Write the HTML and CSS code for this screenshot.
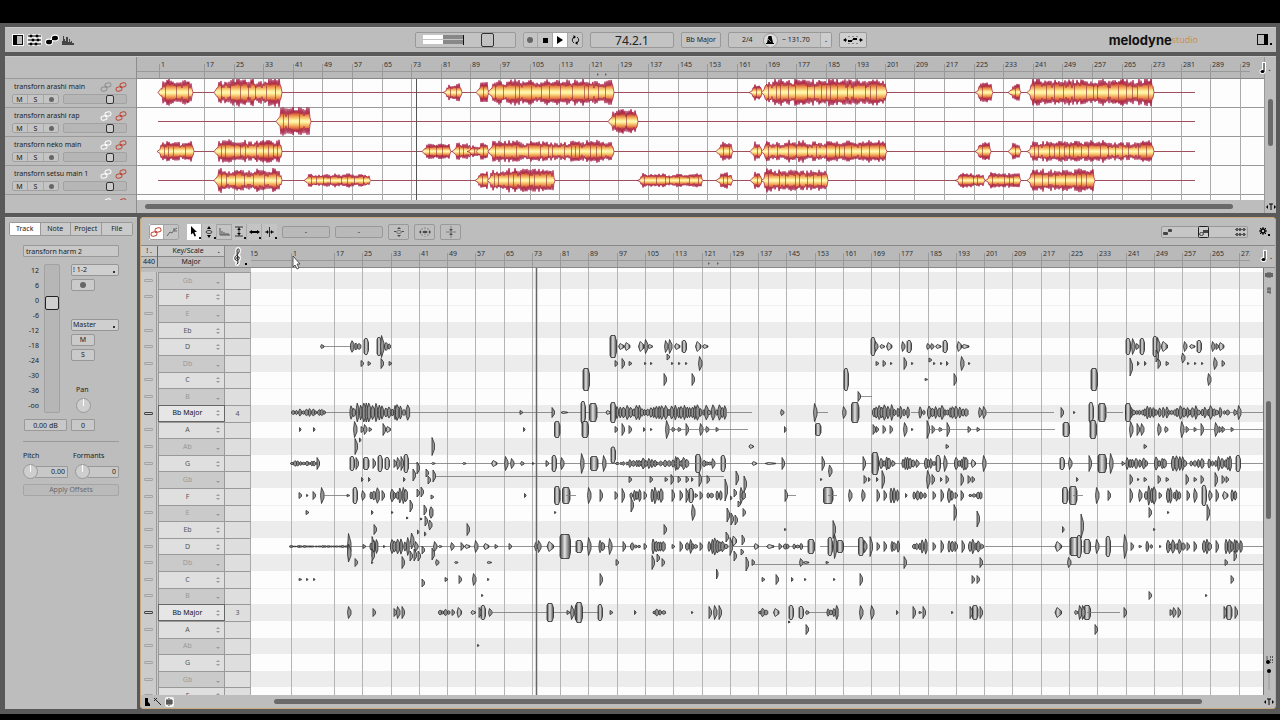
FILE: index.html
```html
<!DOCTYPE html>
<html lang="en">
<head>
  <meta charset="utf-8">
  <title>Melodyne Studio</title>
  <link rel="stylesheet" href="styles.css">
</head>
<body>

<svg class="defs" width="0" height="0">
  <defs>
    <linearGradient id="wave" x1="0" y1="0" x2="0" y2="1">
      <stop offset="0" stop-color="#a01440"/>
      <stop offset="0.18" stop-color="#b8303c"/>
      <stop offset="0.3" stop-color="#ec8c4a"/>
      <stop offset="0.44" stop-color="#fde88e"/>
      <stop offset="0.5" stop-color="#fff8b8"/>
      <stop offset="0.56" stop-color="#fde88e"/>
      <stop offset="0.7" stop-color="#ec8c4a"/>
      <stop offset="0.82" stop-color="#b8303c"/>
      <stop offset="1" stop-color="#a01440"/>
    </linearGradient>
    <linearGradient id="blob">
      <stop offset="0" stop-color="#444"/>
      <stop offset="0.45" stop-color="#e4e4e4"/>
      <stop offset="1" stop-color="#444"/>
    </linearGradient>
    <symbol id="link" viewBox="0 0 12 10">
      <rect x="1" y="5" width="6" height="4" rx="2" transform="rotate(-12 4 7)" fill="none" stroke="currentColor"/>
      <rect x="5" y="1" width="6" height="4" rx="2" transform="rotate(-12 8 3)" fill="none" stroke="currentColor"/>
      <path d="M5 6 L7 4" stroke="currentColor"/>
    </symbol>
    <symbol id="quarter" viewBox="0 0 8 12">
      <path d="M5 0 V9" stroke="#fff" stroke-width="4"/>
      <ellipse cx="3.500" cy="9.500" rx="3" ry="2.500" fill="#fff"/>
      <path d="M5 1 V9" stroke="#000" stroke-width="1"/>
      <ellipse cx="3.500" cy="9.500" rx="2" ry="1.500"/>
    </symbol>
    <symbol id="zoomfit" viewBox="0 0 10 8">
      <path d="M5 1 V7 M3 1 H7" stroke="#000" fill="none"/>
      <path d="M0 4 L2 2 V6 Z M10 4 L8 2 V6 Z"/>
    </symbol>
  </defs>
</svg>

<div class="app">

  <header class="panel topbar">
    <div class="views">
      <svg width="12" height="12" viewBox="0 0 12 12"><rect x="0" y="0" width="12" height="12" fill="#fff"/><rect x="1.500" y="1.500" width="9" height="9" fill="#bbb" stroke="#111"/><rect x="1" y="1" width="4" height="10"/></svg>
      <svg width="15" height="12" viewBox="0 0 15 12"><rect width="15" height="12" rx="3" fill="#eee"/><path d="M1 2 H14 M1 6 H14 M1 10 H14" stroke="#000"/><path d="M3 1h2v2h-2z M9 1h2v2h-2z M5 5h2v2h-2z M10 5h2v2h-2z M3 9h2v2h-2z M8 9h2v2h-2z" stroke="#000" stroke-width=".6"/></svg>
      <svg width="14" height="12" viewBox="0 0 14 12"><ellipse cx="4" cy="8" rx="4" ry="3.500" fill="#fff"/><ellipse cx="10" cy="4" rx="4" ry="3.500" fill="#fff"/><ellipse cx="4" cy="8" rx="3" ry="2.300"/><ellipse cx="10" cy="4" rx="3" ry="2.300"/><path d="M6 7 L8 5" stroke="#000"/></svg>
      <svg width="12" height="12" viewBox="0 0 12 12"><path d="M0 11 V7 H1 V2 H2 V5 H3 V7 H4 V3 H6 V8 H7 V5 H8 V8 H9 V7 H10 V9 H12 V11 Z" fill="#444"/></svg>
    </div>
    <div class="transport">
      <div class="volume box">
        <div class="meter"><i></i><i></i></div>
        <input type="range" aria-label="Master volume" min="0" max="100" value="46">
      </div>
      <div class="btns">
        <button aria-label="Record"><i class="rec"></i></button>
        <button aria-label="Stop"><i class="stop"></i></button>
        <button class="on" aria-label="Play"><i class="play"></i></button>
        <button aria-label="Cycle"><svg width="9" height="10" viewBox="0 0 9 10"><path d="M3 2 A3.500 3.500 0 0 0 3 8 M6 2 A3.500 3.500 0 0 1 6 8" fill="none" stroke="#222"/><path d="M2.500 0 L5 2 L2.500 4 Z M6.500 6 L4 8 L6.500 10 Z"/></svg></button>
      </div>
      <div class="box position">74.2.1</div>
      <button class="box scale">Bb Major</button>
      <div class="box tempo">
        <span>2/4</span>
        <button class="metro" aria-label="Metronome"><svg width="8" height="8" viewBox="0 0 8 8"><path d="M2.500 0 H5.500 L7 7 H1 Z"/><path d="M1 2 L5 6" stroke="#aaa" stroke-width=".8"/><path d="M0 7.500 H8" stroke="#000"/></svg></button>
        <span class="bpm">~ 131.70</span>
        <button class="drop" aria-label="Tempo menu">.</button>
      </div>
      <button class="box adapt" aria-label="Auto stretch"><svg width="20" height="10" viewBox="0 0 20 10"><path d="M0 5 L3 3 V7 Z M20 5 L17 3 V7 Z M5 5 h4 v2 h-4z M10 3 h4 v2 h-4z"/><path d="M2 5 H4 M16 5 H18 M8 6 L11 4" stroke="#000"/><path d="M5 1.500 H15 M5 8.500 H15" stroke="#888" stroke-dasharray="2 2"/></svg></button>
    </div>
    <div class="brand"><b>melodyne</b><span>studio</span></div>
    <svg class="side" width="15" height="12" viewBox="0 0 15 12"><rect x=".5" y=".5" width="10" height="10" fill="none" stroke="#111"/><rect x="7" y="0" width="4" height="11"/><rect x="13" y="9" width="2" height="2"/></svg>
  </header>

  <section class="panel arrange">
    <div class="tracks">
      <div class="tracks-head"></div>
      <div id="tracks" class="tracks-body"></div>
    </div>
    <div class="lanes">
      <svg id="arrangeRuler" class="ruler"></svg>
      <div class="lane-body"><svg id="arrangeLanes"></svg></div>
      <div class="hscroll"><i></i></div>
    </div>
    <div class="vscroll">
      <div class="corner"><svg width="8" height="12"><use href="#quarter"/></svg><span>.</span></div>
      <div class="vtrack"><i></i></div>
      <svg width="10" height="8"><use href="#zoomfit"/></svg>
    </div>
  </section>

  <main>
    <aside class="panel inspector">
      <nav class="tabs">
        <button class="on">Track</button><button>Note</button><button>Project</button><button>File</button>
      </nav>
      <input class="field name" type="text" aria-label="Track name" value="transforn harm 2">
      <div class="strip">
        <div class="scale-labels">
          <span>12</span><span>6</span><span>0</span><span>-6</span><span>-12</span><span>-18</span><span>-24</span><span>-30</span><span>-36</span><span>-oo</span>
        </div>
        <input class="fader" type="range" aria-label="Track volume" min="0" max="100" value="77">
        <div class="routing">
          <select aria-label="Input"><option>! 1-2</option></select>
          <button class="small" aria-label="Record arm"><i class="rec"></i></button>
          <select class="out" aria-label="Output"><option>Master</option></select>
          <button class="small">M</button>
          <button class="small">S</button>
          <span class="pan">Pan</span>
          <i class="knob"></i>
        </div>
      </div>
      <div class="readouts">
        <input class="field" type="text" aria-label="Volume" value="0.00 dB">
        <input class="field" type="text" aria-label="Pan" value="0">
      </div>
      <div class="offsets">
        <label for="pitch">Pitch</label><label for="formants">Formants</label>
        <div class="dial"><i class="knob"></i><input id="pitch" class="field" type="text" value="0.00"></div>
        <div class="dial"><i class="knob"></i><input id="formants" class="field" type="text" value="0"></div>
      </div>
      <button class="apply" disabled>Apply Offsets</button>
    </aside>

    <section class="editor">
      <div class="tools">
        <div class="btns">
          <button class="on red" aria-label="Assign"><svg width="12" height="10"><use href="#link"/></svg></button>
          <button aria-label="Wrench"><svg width="12" height="10" viewBox="0 0 12 10"><path d="M1 9 L4 5 L6 6 L8 3 L11 1 M8 1 V4 H11" fill="none" stroke="#666"/></svg></button>
        </div>
        <div class="btns six">
          <button class="on dot" aria-label="Main tool"><svg width="8" height="11" viewBox="0 0 8 11"><path d="M1 0 L7 6 H4.500 L6 10 L4.500 10.500 L3 7 L1 8.500 Z"/></svg></button>
          <button class="dot" aria-label="Pitch tool"><svg width="8" height="12" viewBox="0 0 8 12"><path d="M4 0 L6 3 H2 Z M4 12 L6 9 H2 Z"/><ellipse cx="4" cy="6" rx="3" ry="1.500" fill="none" stroke="#444"/></svg></button>
          <button aria-label="Formant tool"><svg width="11" height="8" viewBox="0 0 11 8"><path d="M1 0 V7 H11 M3 7 V3 M5 7 V4 M7 7 V5 M9 7 V5" fill="none" stroke="#555"/></svg></button>
          <button class="dot" aria-label="Amplitude tool"><svg width="10" height="11" viewBox="0 0 10 11"><path d="M1 1 H9 M1 10 H9 M5 1 V10" stroke="#333"/><path d="M5 2 L7 4 H3 Z M5 9 L7 7 H3 Z"/></svg></button>
          <button class="dot" aria-label="Timing tool"><svg width="11" height="8" viewBox="0 0 11 8"><path d="M0 4 L3 2 V6 Z M11 4 L8 2 V6 Z M3 3 h5 v2 h-5z"/></svg></button>
          <button class="dot" aria-label="Note separation tool"><svg width="11" height="10" viewBox="0 0 11 10"><path d="M5.500 0 V10 M1 5 H10" stroke="#333"/><path d="M2 5 L4 3 V7 Z M9 5 L7 3 V7 Z"/></svg></button>
        </div>
        <input class="value" type="text" aria-label="Pitch value" value="-">
        <input class="value" type="text" aria-label="Cent value" value="-">
        <button class="macro" aria-label="Correct pitch"><svg width="12" height="12" viewBox="0 0 12 12"><path d="M6 1 L8 3 H4 Z M6 11 L8 9 H4 Z M1 5 h2 v1 h-2z M9 5 h2 v1 h-2z"/><ellipse cx="6" cy="6" rx="2.500" ry="1.500" fill="none" stroke="#444"/></svg></button>
        <button class="macro" aria-label="Quantize time"><svg width="12" height="10" viewBox="0 0 12 10"><path d="M6 0 V10 M3 1 V9 M9 1 V9" stroke="#666" stroke-dasharray="2 1"/><path d="M0 5 L2 3 V7 Z M12 5 L10 3 V7 Z M4 4 h4 v2 h-4z"/></svg></button>
        <button class="macro" aria-label="Level"><svg width="10" height="12" viewBox="0 0 10 12"><path d="M0 6 H10 M5 0 V12" stroke="#555"/><path d="M5 5 L7 3 H3 Z M5 7 L7 9 H3 Z"/></svg></button>
        <div class="display">
          <svg width="9" height="6" viewBox="0 0 9 6"><rect x="0" y="3" width="5" height="3" rx="1" fill="#444"/><rect x="5" y="0" width="4" height="3" rx="1" fill="#444"/></svg>
          <svg class="sel" width="11" height="12" viewBox="0 0 11 12"><rect x=".5" y=".5" width="10" height="11" rx="1" fill="#ccc" stroke="#222"/><ellipse cx="3.500" cy="8" rx="2" ry="1.500" fill="none" stroke="#444"/><rect x="5" y="4" width="5" height="3" fill="#444"/></svg>
          <svg width="11" height="8" viewBox="0 0 11 8"><path d="M0 1.500 H11 M0 6.500 H11" stroke="#555"/><path d="M1 0h2v3h-2z M4 0h2v3h-2z M8 0h2v3h-2z M1 5h2v3h-2z M4 5h2v3h-2z M8 5h2v3h-2z" fill="#555"/></svg>
        </div>
        <button class="gear" aria-label="Options"><svg width="11" height="9" viewBox="0 0 11 9"><circle cx="4" cy="4" r="2" fill="none" stroke="#000" stroke-width="1.500"/><path d="M4 0 V2 M4 6 V8 M0 4 H2 M6 4 H8 M1 1 L2.500 2.500 M7 1 L5.500 2.500 M1 7 L2.500 5.500 M7 7 L5.500 5.500" stroke="#000"/><rect x="9" y="7" width="2" height="2"/></svg></button>
      </div>

      <div class="heads">
        <div class="tuning"><span>! .</span><span>440</span></div>
        <div class="keyhead"><span>Key/Scale<em>.</em></span><span>Major</span></div>
        <div class="clef"><svg width="18" height="20" viewBox="0 0 18 20"><g fill="none" stroke-linecap="round"><path d="M5 17 L6 16 L5 4 C5 1 8 1 7 5 C6 8 2 9 3 12 C4 15 8 13 7 10 C5 9 4 11 5 12" stroke="#f0f0f0" stroke-width="4"/><path d="M5 17 L6 16 L5 4 C5 1 8 1 7 5 C6 8 2 9 3 12 C4 15 8 13 7 10 C5 9 4 11 5 12" stroke="#222"/></g><rect x="13" y="16" width="2" height="2"/></svg></div>
        <svg id="editorRuler" class="ruler"></svg>
        <div class="corner"><svg width="8" height="12"><use href="#quarter"/></svg><span>.</span></div>
      </div>

      <div class="score">
        <div class="keys" id="keys"></div>
        <div class="canvas">
          <div class="stripes" id="stripes"></div>
          <svg id="notes"></svg>
        </div>
        <div class="vscroll">
          <svg width="8" height="8" viewBox="0 0 8 8"><path d="M1 2 V6 M3 1 V7 M5 1 V7 M7 2 V6 M0 3 H8 M0 5 H8" stroke="#333" stroke-width=".8"/></svg>
          <svg width="8" height="8" viewBox="0 0 8 8"><path d="M3 1 V7 M5 1 V8 M2 3 H6 M2 6 H6" stroke="#444" stroke-width=".8"/></svg>
          <div class="vtrack"><i></i></div>
          <svg width="8" height="34" viewBox="0 0 8 34"><path d="M5.500 0 V7 M7.500 0 V7 M1 1 H4 M1 3 H4" stroke="#555" stroke-dasharray="2 1"/><circle cx="3" cy="6" r="2"/><circle cx="4" cy="15" r="2"/><path d="M4 17 V34" stroke="#999"/></svg>
        </div>
      </div>

      <div class="foot">
        <svg width="32" height="10" viewBox="0 0 32 10"><path d="M1 1 H4 V5 L6 7 V9 H1 Z"/><path d="M10 1 L17 8 M10 4 L13 1" stroke="#222"/><rect x="21" y="0" width="9" height="10" rx="2" fill="#f4f4f4"/><path d="M23 2 V8 M25 1 V9 M27 2 V8 M22 4 H29 M22 6 H29" stroke="#000" stroke-width=".8"/></svg>
        <div class="hscroll"><i></i></div>
        <svg width="10" height="8"><use href="#zoomfit"/></svg>
      </div>

      <svg class="pointer" width="10" height="16" viewBox="0 0 10 16"><path d="M1 1 L8 9 H5 L7 13 L5 14 L3 10 L1 12 Z" fill="#fff" stroke="#333" stroke-width=".8"/></svg>
    </section>
  </main>
</div>

<script src="script.js"></script>
</body>
</html>
```

FILE: styles.css
```css
* {
  box-sizing: border-box;
}

body {
  margin: 0;
  height: 100vh;
  padding: 23px 0 6px;
  background: #000;
  font-family: "Noto Sans", Tahoma, sans-serif;
  font-size: 7px;
  line-height: 10px;
  color: #222;
}

button, input, select {
  font: inherit;
  color: inherit;
  margin: 0;
  padding: 0;
}

svg {
  display: block;
  flex: none;
}

i {
  display: block;
}

.defs {
  position: absolute;
}

.app {
  height: 100%;
  display: flex;
  flex-direction: column;
  gap: 4px;
  padding: 4px 4px 5px 5px;
  background: #595959;
}

.panel {
  background: #bdbdbd;
  border-top: 1px solid #cacaca;
}

/* top bar */
.topbar {
  display: flex;
  align-items: center;
  height: 25px;
  flex: none;
  padding-right: 4px;
}

.views {
  display: flex;
  gap: 3px;
  width: 410px;
  padding-left: 7px;
}

.transport {
  display: flex;
  gap: 7px;
}

.box {
  height: 16px;
  border: 1px solid #999;
  border-radius: 2px;
  background: #c3c3c3;
}

.volume {
  display: flex;
  align-items: center;
  width: 101px;
  padding-left: 7px;
}

.meter {
  width: 41px;
  border-right: 1px solid #111;
}

.meter i {
  height: 4px;
  margin-bottom: 1px;
  background: linear-gradient(90deg, #fff 50%, #888 50%);
}

input[type="range"] {
  appearance: none;
  background: transparent;
  border: 1px solid #a2a2a2;
  border-radius: 2px;
}

input.fader,
.track input[type="range"] {
  background: #b6b6b6;
}

.volume input[type="range"] {
  flex: 1;
  min-width: 0;
  width: 50px;
  height: 14px;
  border: none;
}

.volume input::-webkit-slider-thumb {
  appearance: none;
  width: 13px;
  height: 14px;
  border: 1px solid #333;
  border-radius: 2px;
  background: #c2c2c2;
}

.btns {
  display: flex;
  height: 16px;
  outline: 1px solid #a0a0a0;
  outline-offset: -1px;
  border-radius: 2px;
}

.btns button {
  display: flex;
  align-items: center;
  justify-content: center;
  width: 15px;
  border: 0;
  border-right: 1px solid #a8a8a8;
  background: #c4c4c4;
}

.btns button:last-child {
  border-right: 0;
}

.btns button.on {
  background: #fff;
}

.rec {
  width: 6px;
  height: 6px;
  border-radius: 50%;
  background: #666;
}

.stop {
  width: 5px;
  height: 5px;
  background: #000;
}

.play {
  border-left: 6px solid #000;
  border-top: 4px solid transparent;
  border-bottom: 4px solid transparent;
}

.position {
  width: 84px;
  font-size: 12px;
  line-height: 15px;
  text-align: center;
}

.scale {
  width: 40px;
}

.tempo {
  display: flex;
  align-items: center;
  justify-content: space-between;
  width: 104px;
  padding-left: 13px;
}

.metro {
  display: flex;
  align-items: center;
  justify-content: center;
  width: 15px;
  height: 15px;
  border: 1px solid #999;
  border-radius: 50%;
  background: #ddd;
}

.bpm {
  margin-left: -6px;
}

.drop {
  align-self: stretch;
  width: 11px;
  border: 0;
  border-left: 1px solid #aaa;
  background: #cdcdcd;
  font-weight: bold;
}

.adapt {
  display: flex;
  align-items: center;
  justify-content: center;
  width: 28px;
  background: #d0d0d0;
}

.brand {
  display: flex;
  margin-left: auto;
  margin-right: 59px;
  font-family: Inter, sans-serif;
  font-size: 13px;
  line-height: 14px;
  color: #111;
}

.brand b {
  font-weight: 700;
}

.brand span {
  font-family: "Open Sans", sans-serif;
  font-size: 9px;
  color: #cf8a48;
}

/* arrangement */
.arrange {
  display: flex;
  height: 157px;
  flex: none;
}

.tracks {
  width: 132px;
  border-right: 1px solid #8d8d8d;
}

.tracks-head {
  height: 21px;
}

.tracks-body {
  height: 122px;
  overflow: hidden;
}

.track {
  height: 29px;
  padding: 3px 9px 0 7px;
  border-top: 1px solid #999;
}

.track .row {
  display: flex;
  align-items: center;
  gap: 3px;
}

.track .title {
  flex: 1;
  min-width: 0;
  padding-left: 2px;
  white-space: nowrap;
}

.track .row + .row {
  gap: 4px;
  margin-top: 2px;
}

.track .btns {
  width: 47px;
  height: 10px;
}

.track .btns button {
  flex: 1;
  line-height: 9px;
}

.track .rec {
  width: 5px;
  height: 5px;
}

.track input {
  flex: 1;
  width: 64px;
  height: 10px;
}

.track input::-webkit-slider-thumb {
  appearance: none;
  width: 8px;
  height: 9px;
  border: 1px solid #333;
  border-radius: 2px;
  background: #ccc;
}

.grey { color: #8f8f8f; }
.white { color: #fff; }
.red { color: #c04a38; }

.lanes {
  flex: 1;
  min-width: 0;
  display: flex;
  flex-direction: column;
}

.ruler {
  width: 100%;
  height: 21px;
  background: #b9b9b9;
  font-size: 7px;
}

.lane-body {
  height: 122px;
  border-top: 1px solid #888;
  background: #fdfdfd;
  overflow: hidden;
}

.lane-body svg, #notes {
  width: 100%;
  height: 100%;
}

.hscroll {
  flex: 1;
  display: flex;
  align-items: center;
  padding: 0 31px 0 8px;
}

.hscroll i {
  width: 100%;
  height: 5px;
  border-radius: 3px;
  background: #6a6a6a;
}

.vscroll {
  display: flex;
  flex-direction: column;
  align-items: center;
  width: 12px;
  padding-bottom: 2px;
}

.arrange .vscroll {
  border-left: 1px solid #999;
}

.arrange .vscroll .corner {
  height: 21px;
}

.corner {
  display: flex;
  align-items: flex-end;
  width: 12px;
  font-weight: bold;
}

.arrange .corner {
  margin-left: -6px;
  padding-bottom: 4px;
}

.heads .corner {
  padding-bottom: 5px;
}

.corner svg {
  margin-left: -3px;
}

.corner span {
  margin-left: 2px;
}

.vtrack {
  flex: 1;
  width: 5px;
  padding-top: 21px;
}

.vtrack i {
  height: 47px;
  border-radius: 3px;
  background: #6a6a6a;
}

/* lower half */
main {
  flex: 1;
  min-height: 0;
  display: flex;
  gap: 3px;
}

.inspector {
  width: 132px;
  padding: 4px 4px;
}

.inspector .tabs {
  display: flex;
  border: 1px solid #989898;
  border-radius: 2px;
}

.tabs button {
  flex: 1 1 auto;
  width: 25%;
  height: 12px;
  border: 0;
  border-right: 1px solid #999;
  background: #cacaca;
  line-height: 10px;
}

.tabs button:last-child {
  border-right: 0;
}

.tabs button.on {
  background: #fff;
}

.field {
  display: block;
  height: 12px;
  border: 1px solid #999;
  border-radius: 1px;
  background: #c8c8c8;
  text-align: center;
}

.name {
  width: 96px;
  margin: 9px 14px 7px;
  text-align: left;
  padding-left: 2px;
}

.strip {
  display: flex;
  height: 149px;
}

.scale-labels {
  display: flex;
  flex-direction: column;
  justify-content: space-between;
  width: 30px;
  padding: 2px 0;
  text-align: right;
}

.fader {
  writing-mode: vertical-lr;
  direction: rtl;
  width: 16px;
  height: 149px;
  margin-left: 5px;
}

.fader::-webkit-slider-thumb {
  appearance: none;
  width: 14px;
  height: 14px;
  border: 1px solid #222;
  border-radius: 2px;
  background: #cfcfcf;
}

.routing {
  display: flex;
  flex-direction: column;
  gap: 3px;
  margin-left: 11px;
}

.routing select {
  width: 48px;
  height: 12px;
  padding-left: 1px;
  appearance: none;
  border: 1px solid #969696;
  border-radius: 2px;
  background: linear-gradient(#333, #333) 41px 6px / 2px 2px no-repeat #cfcfcf;
}

.routing .out {
  margin-top: 25px;
}

.small {
  display: flex;
  align-items: center;
  justify-content: center;
  width: 24px;
  height: 12px;
  border: 1px solid #989898;
  border-radius: 2px;
  background: #cacaca;
  line-height: 10px;
}

.pan {
  margin: 21px 0 0 5px;
}

.knob {
  flex: none;
  width: 15px;
  height: 15px;
  margin-left: 5px;
  border: 1px solid #999;
  border-radius: 50%;
  background: linear-gradient(90deg, transparent 6px, #fff 6px, #fff 7px, transparent 7px) 0 0 / 100% 7px no-repeat #cecece;
}

.readouts {
  display: flex;
  gap: 4px;
  margin: 6px 15px 0;
  padding-bottom: 10px;
}

.readouts .field:first-child {
  width: 43px;
}

.readouts .field:last-child {
  width: 24px;
}

.offsets {
  display: grid;
  grid-template-columns: 48px 48px;
  row-gap: 3px;
  margin: 0 14px;
  padding-top: 9px;
  border-top: 1px solid #999;
}

.offsets label + label {
  padding-left: 2px;
}

.dial {
  display: flex;
  align-items: center;
}

.dial .knob {
  margin-left: 0;
  margin-right: -3px;
  z-index: 1;
}

.dial + .dial .knob {
  margin-left: 4px;
}

.dial .field {
  flex: 1;
  width: 30px;
  min-width: 0;
  margin-right: 3px;
  padding-right: 2px;
  text-align: right;
}

.dial + .dial .field {
  margin-right: 0;
}

.apply {
  width: 96px;
  height: 12px;
  margin: 5px 14px;
  border: 1px solid #a5a5a5;
  border-radius: 2px;
  background: #bababa;
  color: #6a6a6a;
  line-height: 10px;
}

/* note editor */
.editor {
  position: relative;
  flex: 1;
  min-width: 0;
  display: flex;
  flex-direction: column;
  border: 1px solid #c9a97e;
  border-radius: 3px;
  background: #bdbdbd;
}

.tools {
  display: flex;
  align-items: center;
  gap: 5px;
  height: 28px;
  flex: none;
  padding: 0 1px 0 8px;
  border-bottom: 1px solid #888;
}

.tools .six {
  margin-left: 3px;
}

.tools .dot {
  position: relative;
}

.tools .dot::after {
  content: "";
  position: absolute;
  right: 0;
  bottom: 1px;
  width: 2px;
  height: 2px;
  background: #111;
}

.value {
  width: 48px;
  height: 12px;
  border: 1px solid #999;
  border-radius: 2px;
  background: #b9b9b9;
  text-align: center;
}

.macro {
  display: flex;
  align-items: center;
  justify-content: center;
  width: 21px;
  height: 16px;
  border: 1px solid #999;
  border-radius: 2px;
  background: #bebebe;
}

.macro svg {
  opacity: 0.6;
}

.display {
  display: flex;
  align-items: center;
  justify-content: space-between;
  width: 87px;
  height: 12px;
  margin-left: auto;
  padding: 0 1px;
  border: 1px solid #999;
  border-radius: 2px;
  background: #c6c6c6;
}

.gear {
  margin-left: 6px;
  margin-right: 4px;
  border: 0;
  background: none;
}

.heads {
  display: flex;
  height: 22px;
  flex: none;
  border-bottom: 1px solid #888;
}

.tuning, .keyhead {
  display: flex;
  flex-direction: column;
  background: #c0c0c0;
  text-align: center;
}

.tuning {
  width: 17px;
  border-right: 1px solid #666;
}

.keyhead {
  width: 67px;
  border-right: 1px solid #888;
}

.tuning span, .keyhead span {
  flex: 1;
}

.tuning span:first-child, .keyhead span:first-child {
  background: #cacaca;
  border-bottom: 1px solid #888;
}

.keyhead em {
  float: right;
  margin-right: 4px;
  font-weight: bold;
}

.clef {
  width: 26px;
  padding: 1px 0 0 7px;
}

.heads .ruler {
  flex: 1;
  min-width: 0;
}

.score {
  flex: 1;
  min-height: 0;
  display: flex;
  overflow: hidden;
}

.keys {
  width: 110px;
  height: 432px;
  margin-top: 4px;
  display: grid;
  grid-auto-rows: 1fr;
}

.key {
  display: grid;
  grid-template-columns: 15px 2px 67px 1fr;
  align-items: stretch;
  color: #555;
  background: #cbcbcb;
}

.key .pin {
  align-self: center;
  width: 9px;
  height: 3px;
  margin-left: 3px;
  border: 1px solid #a4a4a4;
  border-radius: 1px;
}

.key .gap {
  border-left: 1px solid #999;
}

.key .label {
  display: flex;
  align-items: center;
  justify-content: center;
  position: relative;
  padding-right: 8px;
  border: 1px solid #999;
  border-width: 1px 1px 0 1px;
  background: #dfdfdf;
}

.key .label svg {
  position: absolute;
  right: 4px;
}

.key .oct {
  display: flex;
  align-items: center;
  justify-content: center;
  border-top: 1px solid #999;
  border-right: 1px solid #aaa;
  background: #dedede;
}

.key.off .label {
  background: #cacaca;
  color: #999;
}

.key.root .label {
  border: 1px solid #666;
  background: #e6e6e6;
  color: #111;
}

.key.root .pin {
  border-color: #444;
}

.canvas {
  flex: 1;
  min-width: 0;
  position: relative;
  overflow: hidden;
  background: #fdfdfd;
}

.stripes {
  height: 432px;
  margin-top: 4px;
  display: grid;
  grid-auto-rows: 1fr;
}

.stripes .black {
  background: #ececec;
}

.stripes .edge {
  border-top: 1px solid #f0f0f0;
}

/* notes lie over the stripes */
#notes {
  position: absolute;
  inset: 0;
}

.score .vscroll {
  gap: 7px;
  padding: 3px 2px 5px 0;
  border-left: 1px solid #777;
}

.score .vtrack {
  padding-top: 100px;
}

.score .vtrack i {
  height: 118px;
}

.foot {
  display: flex;
  align-items: center;
  height: 13px;
  flex: none;
  padding-left: 3px;
}

.foot .hscroll {
  padding: 0 62px 0 98px;
}

.foot > svg:last-child {
  margin-right: 1px;
}

.pointer {
  position: absolute;
  left: 151px;
  top: 37px;
}
```

FILE: script.js
```js
const tracks = [
  { name: "transforn arashi main", link: "grey" },
  { name: "transforn arashi rap", link: "white" },
  { name: "transforn neko main", link: "white" },
  { name: "transforn setsu main 1", link: "white" },
  { name: "", link: "white" }
];

document.getElementById("tracks").innerHTML = tracks.map(t => `
  <div class="track">
    <div class="row">
      <span class="title">${t.name}</span>
      <svg class="${t.link}" width="12" height="10"><use href="#link"/></svg>
      <svg class="red" width="12" height="10"><use href="#link"/></svg>
    </div>
    ${t.name ? `<div class="row">
      <div class="btns"><button>M</button><button>S</button><button aria-label="Record"><i class="rec"></i></button></div>
      <input type="range" aria-label="Volume ${t.name}" min="0" max="100" value="78">
    </div>` : ""}
  </div>`).join("");

// repeatable noise so the waves do not change on reload
let seed = 7;
function rnd() {
  seed = (seed * 16807) % 2147483647;
  return seed / 2147483647;
}

function line(x1, y1, x2, y2, color, w) {
  return `<path d="M${x1} ${y1} L${x2} ${y2}" stroke="${color}" stroke-width="${w || 1}"/>`;
}

// bars 17, 25, 33 ... are evenly spaced; bar 1 stands on its own
function bars(first, step, last) {
  const list = [];
  for (let n = 17; n <= last; n += 8) list.push([n, Math.round(first + (n - 17) / 8 * step)]);
  return list;
}

function ruler(id, left, list, split, cut, marks) {
  let s = `<defs><clipPath id="${id}Clip"><rect x="0" y="0" width="${cut - left}" height="22"/></clipPath></defs>`;
  s += `<g clip-path="url(#${id}Clip)"><g transform="translate(${-left} 0)">`;
  s += line(left, split + 0.5, cut, split + 0.5, "#999");
  list.forEach(([n, x]) => {
    s += line(x + 0.5, split - 7, x + 0.5, 22, "#999");
    s += `<text x="${x + 2}" y="${split - 4}" fill="#333">${n}</text>`;
  });
  marks.forEach(x => { s += `<path d="M${x} ${split + 2} v3 l2 -1.500z" fill="#666"/>`; });
  document.getElementById(id).innerHTML = s + "</g></g>";
}

const arrangeBars = [[1, 159], ...bars(204, 29.6, 297)];
ruler("arrangeRuler", 137, arrangeBars, 14, 1250, [597, 605]);

const editorBars = [[1, 291], ...bars(334, 28.27, 273)];
ruler("editorRuler", 251, [[15, 248], ...editorBars], 14, 1250, [708, 717]);

// start, end, height of every phrase
const phrases = [
  [[161,192,14],[217,281,14],[446,461,10],[479,488,10],[491,613,13],[752,761,10],[764,886,14],[978,992,10],[1011,1020,9],[1030,1153,14]],
  [[279,310,14],[611,637,14]],
  [[160,193,10],[217,281,12],[425,450,10],[455,471,9],[470,480,6],[479,488,9],[491,613,11],[719,732,10],[753,761,10],[764,886,11],[978,990,10],[1011,1020,10],[1030,1153,11]],
  [[217,281,12],[307,370,7],[478,488,9],[490,554,12],[640,702,7],[719,732,8],[753,761,9],[764,827,12],[958,984,8],[988,1020,9],[1030,1094,12]]
];

function phrase(x1, x2, y, amp) {
  const top = [], bottom = [];
  let level = 0.75;
  for (let x = x1; x <= x2; x += 1) {
    const edge = Math.min(1, (x - x1 + 1) / 3, (x2 - x + 1) / 2);
    level = Math.max(0.58, Math.min(0.78, level + (rnd() - 0.5) * 0.25));
    const spike = x % 2 ? rnd() * 0.28 : -0.08 - rnd() * 0.2;
    const h = amp * edge * (level + spike);
    top.push(`${x} ${(y - h).toFixed(1)}`);
    bottom.unshift(`${x} ${(y + h * (0.9 + rnd() * 0.1)).toFixed(1)}`);
  }
  let s = `<path d="M${x1 - 3} ${y} L${top.join(" L")} L${x2 + 1} ${y} L${bottom.join(" L")} Z" fill="url(#wave)" stroke="#a01440" stroke-width="0.7"/>`;
  for (let x = x1 + 4; x < x2 - 2; x += 4 + Math.floor(rnd() * 9)) {
    s += line(x + 0.5, y - amp * 0.5, x + 0.5, y + amp * 0.5, "#8c2a30", 0.6);
  }
  return s;
}

let lanes = '<g transform="translate(-137 -79)">';
[107, 136, 165, 194].forEach(y => { lanes += line(137, y + 0.5, 3000, y + 0.5, "#999"); });
arrangeBars.forEach(([n, x]) => { if (n > 1) lanes += line(x + 0.5, 78, x + 0.5, 201, "#aaa"); });
phrases.forEach((list, i) => {
  const y = Math.round(92 + i * 29.4) + 0.5;
  lanes += line(158, y, 1195, y, "#a0505c");
  list.forEach(([a, b, h]) => { lanes += phrase(a, b, y, h); });
});
lanes += line(416.5, 78, 416.5, 201, "#555", 1);
document.getElementById("arrangeLanes").innerHTML = lanes + "</g>";

// keys of the note editor, from the top down
const names = ["Gb", "F", "E", "Eb", "D", "Db", "C", "B", "Bb Major", "A", "Ab", "G"];
const outside = ["Gb", "E", "Db", "B", "Ab"];
let keys = "", stripes = "";
for (let i = 0; i < 26; i++) {
  const n = names[i % 12];
  const root = n === "Bb Major";
  const off = outside.includes(n);
  const arrows = off ? "M0 5 h4 l-2 2z" : "M0 3 l2 -2 l2 2z M0 5 l2 2 l2 -2z";
  keys += `<div class="key${root ? " root" : ""}${off ? " off" : ""}"><i class="pin"></i><i class="gap"></i>
    <span class="label">${n}<svg width="4" height="8"><path d="${arrows}" fill="#999"/></svg></span>
    <span class="oct">${root ? (i < 12 ? 4 : 3) : ""}</span></div>`;
  stripes += `<div class="${n.includes("b") ? "black" : n === "E" || n === "B" ? "edge" : ""}"></div>`;
}
document.getElementById("keys").innerHTML = keys;
document.getElementById("stripes").innerHTML = stripes;

// one row per pitch: "a>b" a tail line, "a-b h" a run of short notes,
// "x w h y" a single note (w, h and y may be left out)
const score = {
  346: "323>350, 322 3 2, 351-361 10, 366 4 8, 379 4 9, 382 3 11, 385-391 8, 613 6 11, 621 5 3, 627 5 4, 641 5 5, 646 3 7, 650 4 2, 666 3 6, 670 3 7, 677 5 3, 684 4 6, 698 5 5, 705 5 2, 873 4 9, 876 3 5, 882 4 2, 889 5 4, 903 3 5, 909 4 6, 928 3 3, 932 3 3, 938 5 2, 945 4 6, 959 4 5, 965 7 2, 1128 4 8, 1133 3 8, 1137 3 3, 1142 4 8, 1155 4 10, 1158 3 9, 1164 6 5, 1185 3 5, 1192 5 2, 1199 4 6, 1213 3 5, 1217 2 3, 1221 5 4",
  363: "362 2 3, 369, 382 2 5, 390, 616 2 3, 623 2 5, 630, 645 1 1, 651 1 1, 668 2 3 357, 672 1 1, 679 1 1, 686 1 1, 700 3 7, 877 2 2, 884 2 3, 891 1 1, 905 2 6, 912 1 1, 930 2 2 360, 934 1 1, 941 1 1, 947 1 2, 962 3 7, 969 1 1, 1131 2 9 367, 1138 1 2, 1145 1 2, 1157 2 6 356, 1159 2 5, 1167, 1183 3 5 358, 1188 1 1, 1195 1 1, 1202 1 1, 1215 3 6, 1223 2 3",
  379: "586 6 11, 665 2 6, 693 2 6, 846 4 11, 926 2 1, 955 2 6, 1094 6 11, 1209 3 6",
  396: "859>872, 859 2 5",
  412: "292>553, 292-324 4, 350-396 10, 396-409 8, 521 2 2, 553 2 5, 561>640, 564 6 1, 583 4 11, 593 7 9, 608 4 2, 612-726 8, 613 5 10, 726>752, 782 3 3, 815>828, 815 3 9, 844 3 6, 855 7 10, 873-909 8, 911>919, 919-925 6, 928-969 8, 980 3 5, 984 3 6, 984>1054, 1062 2 5, 1074 1 1, 1091 4 10, 1102 7 9, 1105>1123, 1126-1228 7, 1128 5 9, 1235 3 3, 1239 3 7, 1230>1264",
  429: "300 1 2, 314 1 2, 355 3 8, 362 2 3, 365 3 5, 370 2 2, 384 2 6, 388 4 3, 524 1 2, 557 5 8, 585 6 8, 616 2 3, 623 2 6, 630 2 4, 644 1 2, 651 1 1, 667 3 9, 673 3 2, 679 3 2, 687 2 6, 701 3 6, 707 3 3, 717 2 2, 667>748, 785 1 3, 818 5 6, 874 2 5, 877 2 3, 884 2 4, 891 2 4, 905 3 7, 912 1 1, 928 2 9, 933 2 4, 940 3 2, 948 2 7, 928>1055, 969 2 3, 978, 1066 6 7, 1093 6 9, 1131 3 8, 1138 2 6, 1142 3 6, 1159 3 6, 1166 3 3, 1182 3 8, 1187 2 3, 1195, 1202 2 6, 1216 3 7, 1220 2 3, 1223 2 3, 1232, 1182>1264",
  446: "356 2 8, 360 1 2 440, 433 2 9, 751 4 2, 947 2 2, 1145 2 2",
  463: "291-321 3, 318 2 6, 352 4 7, 357 2 6, 366 5 6, 374 2 5, 380 4 8, 387 4 6, 395 2 4, 398 3 6, 402 2 7, 406 4 9, 409>616, 433 3 1, 464 3 1, 494 5 3, 506 3 7, 512 3 5, 522 3 2, 533 1 1, 547 2 3, 554 4 8, 562 3 6, 582 3 10, 594 7 7, 604 3 8, 610>616, 613 4 8 455, 616-645 4, 638-656 6, 656-662 3, 664-687 8, 698 5 9, 703-710 5, 713 3 5, 723 4 8, 616>983, 754 4 2, 770 10 1, 783 2 6, 823 2 7, 830 3 6 471, 864 2 7, 875 6 11, 880-890 7, 893 3 3, 902-915 8, 917 3 4, 925-935 8, 938 4 8, 945 3 8, 955-967 8, 973 4 4, 984 3 8, 985>1264, 1062 4 6, 1070 3 6, 1090 2 8, 1102 8 9, 1111 3 10, 1123 2 2, 1126-1148 6, 1155-1166 7, 1172-1187 8, 1190-1202 6, 1208-1231 8, 1238 4 8",
  479: "435>724 476, 362 1 2, 369 1 2, 404 1 2, 414 2 6 475, 418 2 6 468, 427 2 4 473, 429 2 4 480, 434 2 6 476, 630 2 3, 651 2 3, 666 2 2, 672 2 5, 679 2 3, 687 2 3, 692 1 2, 700 2 7, 708 2 4, 821 1 1, 865 2 4, 869 1 2, 877 1 2, 883 2 9, 928 3 9, 933 2 5, 941 1 2, 947 2 4, 962 2 6, 969 2 4, 973 2 3, 1077 1 2, 1131 2 5, 1138 1 1, 1145 2 2, 1159 2 4, 1167 2 2, 1187 2 5, 1195 2 2, 1202 2 4, 1216 2 7, 1223 2 4, 1227 2 3",
  495: "300 2 3, 307 1 1, 314 2 4, 322 3 8, 324>348, 348 2 1, 355 4 8, 363 3 5, 370-379 9, 383 2 5, 391-406 9, 418 2 4 493, 422 2 5 492, 432 2 2 497, 525 1 2, 557 5 9, 566 7 8, 566>576, 589 3 8, 601 2 6, 616 2 4, 623 2 7, 630-640 8, 632 2 7 505, 645 2 4, 651-664 10, 673 2 6, 681 2 5, 687 2 7, 691 4 7, 696 2 2, 701 2 4, 707-714 3, 716-723 8, 726 2 11 490, 735 2 4 493, 731 1 2 498, 737 2 7 478, 745 2 8 484, 740-745 9, 739 2 3 504, 786>796, 786 2 6, 828 9 8, 828>837, 850 3 6, 863 3 6, 878 2 6, 885 2 5, 890-900 9, 906 1 2, 913-926 9, 934 2 4, 942 2 6, 948-953 9, 956 2 3, 962 2 5, 969-976 4, 977-984 9, 1065 5 8, 1073 7 9, 1073>1083, 1097 3 8, 1109 2 5, 1131 2 7, 1140 3 6, 1145-1154 10, 1160 2 3, 1167-1180 8, 1188 2 5, 1195 3 7, 1204 4 10, 1210 3 5, 1217 2 6, 1225 5 4, 1231-1238 8",
  512: "307 2 2, 372 1 2, 392 1 1, 411 2 6 506, 407 1 1 518, 421 1 1 519, 425 2 5 510, 426 2 5 521, 430-432 7, 555 1 1, 693 3 8, 728 2 7 515, 732 2 6 519, 736 2 5 520, 744 2 4, 955 2 8, 978 2 8 519, 1150 2 5, 1168 1 1, 1208 2 8",
  529: "375 2 5, 418 1 2 532, 425 1 2 534, 430 3 5 525, 468 2 6, 665 2 5, 785 1 1, 834 2 9, 1063 1 3, 1082 2 12 526, 1154 1 1",
  546: "290>640, 290-347 1, 349 3 13, 349 3 9 553, 364 2 2, 370-378 8, 373 2 10, 384 1 1, 391-408 9, 412 3 8 541, 416 3 5, 423 2 4 550, 435 3 5, 440 3 1, 452 3 4, 462 2 4, 467 5 2, 476 3 6, 486 5 3, 496 2 2, 510 2 3, 536 3 4, 539 3 6, 550 6 5, 565 10 12, 579 6 6, 589 3 9, 599-604 10, 610 3 8, 624 2 5, 631-640 5, 645 2 3, 652-665 9, 673 2 2, 681 2 5, 686-696 7, 701 2 4, 708-726 9, 731 2 9, 727 2 5 537, 734 4 5 541, 743 2 5 540, 728>810, 756 4 3, 770 7 2, 780 2 3, 784-788 5, 793-803 4, 811 6 7, 820>864, 830 4 9, 835 3 12, 840 6 6, 861 5 9, 865 3 6, 871 2 10, 878 2 4, 885 2 5, 891-900 7, 913-926 8, 934 2 4, 942 2 6, 948-953 8, 956 2 5, 963 2 6, 969-984 9, 985>1125, 1058 6 5, 1075 10 9, 1079 4 11, 1087 6 7, 1097 3 7, 1108 4 10, 1125 3 12, 1132 2 4, 1140 2 1, 1146-1154 7, 1160 1 1, 1167-1184 8, 1188 2 4, 1195 2 5, 1203-1212 8, 1217 2 6, 1225-1241 8, 1241>1264",
  562: "753>1264 564, 356 2 4, 372 1 1, 373 2 6 555, 403 2 6, 411 2 5 556, 415 2 6 555, 419 2 5 556, 433 2 6 554, 437 3 3, 456 3 1, 489 4 1, 617 2 3, 653 2 7, 658 2 4 558, 663 2 4, 735 2 5 556, 742 2 3 552, 747 2 7 564, 753 2 3, 801 3 4, 806 5 1, 827 2 1, 905 2 6, 981 2 5, 1069 3 5, 1226 2 3, 1235 2 5 556",
  579: "300 2 1, 307 1 1, 314 1 1, 423 2 4 583, 446 2 2, 460 2 4, 474 3 6, 488 1 1, 601 2 6, 717 1 5 574, 763 2 2, 777 2 5, 792 1 2, 805 1 1, 834 1 1, 861 2 6, 973 2 4, 978 2 4, 1232 2 4",
  595: "482 1 1, 1150 2 4, 1206 1 1",
  612: "349 3 6, 374 2 4, 395 2 4, 398 3 6, 403 2 6, 439-449 5, 453 2 3, 459 4 5, 473 4 2, 480 2 5, 483 4 7, 490 3 4, 490>600, 550 6 9, 568 2 2, 572 3 7, 576 3 7, 579 6 10, 600 4 8, 611 2 2, 635 1 2, 653-664 4, 692 1 1, 710 2 6, 715 3 7, 720 2 7, 759-766 5, 776 5 4, 791 4 7, 801 4 6, 805>835, 807 3 2, 827-838 8, 861 3 7, 872 3 7, 897 1 2, 914 2 6, 920 2 1, 924 2 6, 952 1 1, 971 2 6, 975 5 7, 981 2 6, 1058 6 5, 1076 3 2, 1080 3 7, 1087 6 7, 1083 3 7, 1087>1120, 1125 2 5, 1171 2 3, 1174 3 5, 1179 2 5, 1225 2 6, 1229 5 7, 1236 2 6",
  629: "789 1 1 622, 807 2 5, 1096 2 5",
  645: "478 1 1"
};

function note(x, y, w, h, kind) {
  const l = x - w / 2, r = x + w / 2 + 0.5;
  let d;
  if (kind === "run") {
    d = `M${l} ${y - h * 0.4} L${x} ${y - h} L${r} ${y - h * 0.5} V${y + h * 0.5} L${x} ${y + h} L${l} ${y + h * 0.4} Z`;
  } else if (w >= 4 && h > 5) {
    d = `M${l} ${y - h * 0.8} L${l + 1} ${y - h} H${r - 1.5} L${r} ${y - h * 0.5} V${y + h * 0.5} L${r - 1.5} ${y + h} H${l + 1} L${l} ${y + h * 0.8} Z`;
  } else if (w > 2) {
    d = `M${l} ${y} L${x - w / 6} ${y - h} L${r} ${y - h * 0.3} V${y + h * 0.3} L${x - w / 6} ${y + h} Z`;
  } else {
    d = `M${l} ${y - h} L${r} ${y - h * 0.3} V${y + h * 0.3} L${l} ${y + h} Z`;
  }
  const fill = kind === "run" ? "#909090" : w > 3 ? "url(#blob)" : "#999";
  return `<path d="${d}" fill="${fill}" stroke="#2c2c2c" stroke-width="0.8"/>`;
}

let out = '<g transform="translate(-251 -268)">';
editorBars.forEach(([n, x]) => { out += line(x + 0.5, 268, x + 0.5, 1200, "#b4b4b4"); });
Object.keys(score).forEach(key => {
  const y = Number(key) + 0.5;
  score[key].split(", ").forEach(item => {
    const p = item.split(" ");
    if (p[0].includes(">")) {
      const [a, b] = p[0].split(">");
      const ly = p[1] ? Number(p[1]) + 0.5 : y;
      out += line(a, ly, b, ly, "#777", 0.8);
    } else if (p[0].includes("-")) {
      const [a, b] = p[0].split("-").map(Number);
      for (let x = a + 1; x < b; x += 2 + rnd() * 2) {
        out += note(x, y, 2 + Math.round(rnd()), p[1] * (0.25 + rnd() * 0.75), "run");
      }
    } else {
      out += note(Number(p[0]), p[3] ? Number(p[3]) : y, Number(p[1] || 2), Number(p[2] || 2));
    }
  });
});
out += line(536.5, 268, 536.5, 1200, "#666", 1.5);
document.getElementById("notes").innerHTML = out + "</g>";
```
